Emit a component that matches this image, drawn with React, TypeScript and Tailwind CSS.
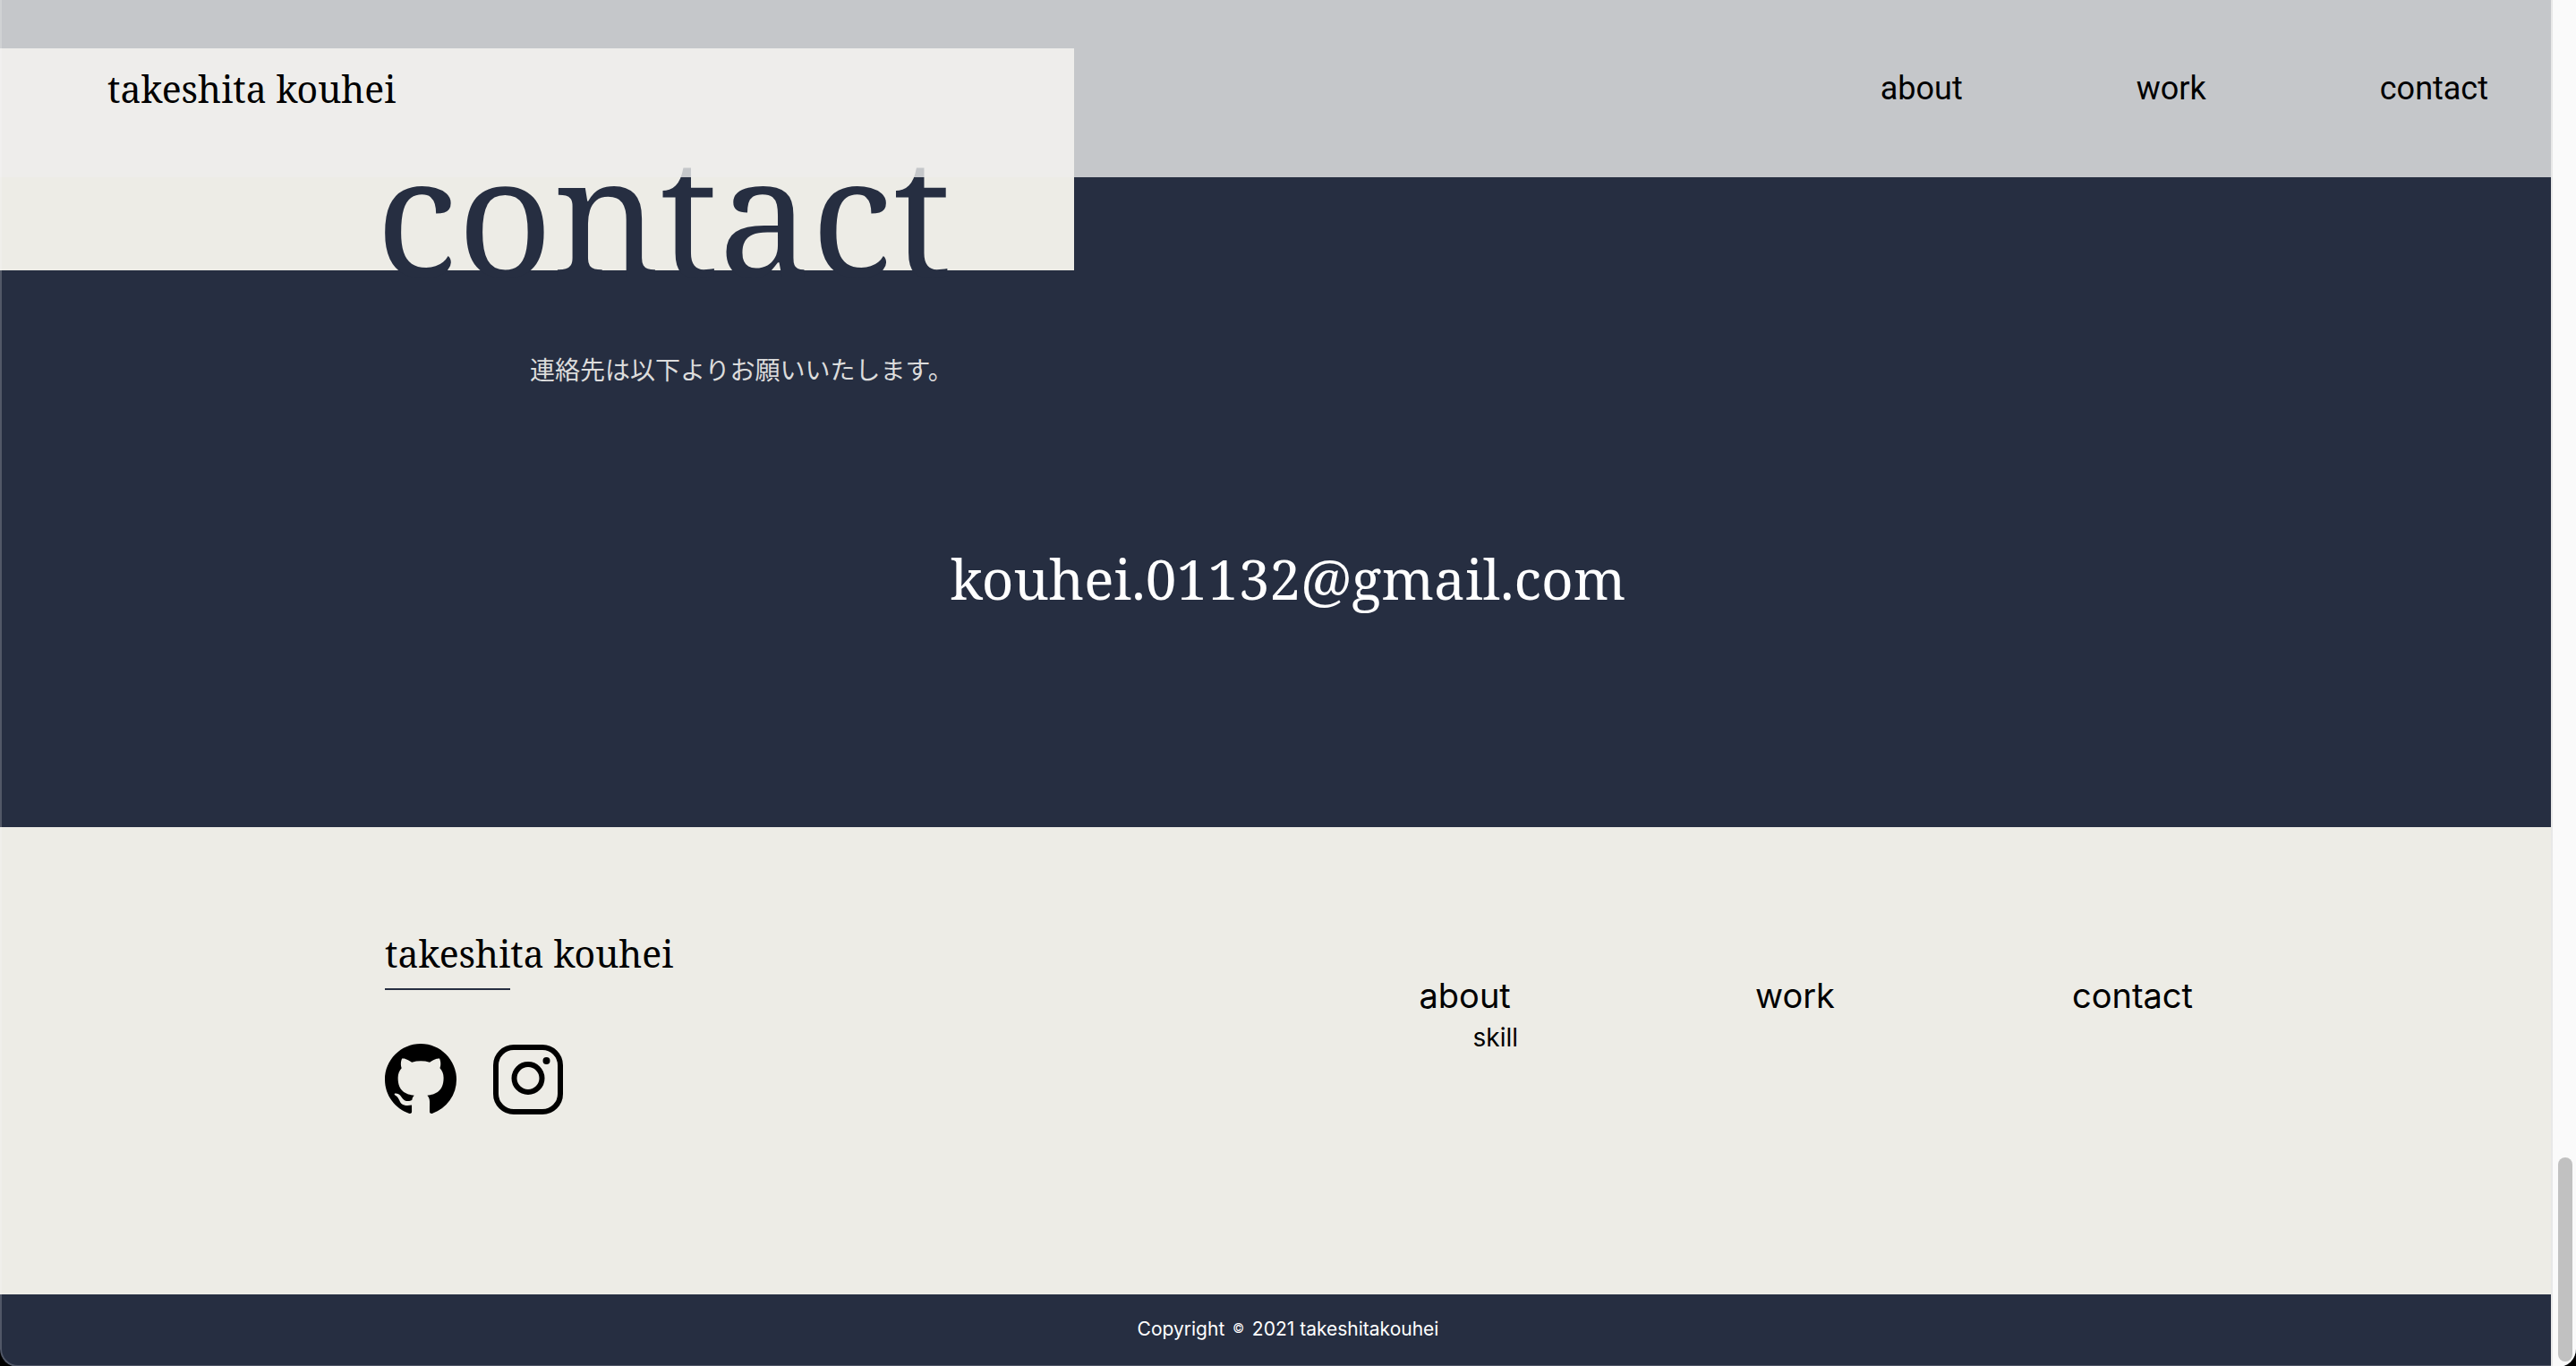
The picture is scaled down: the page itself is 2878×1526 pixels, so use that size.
const serif = "font-['Noto_Serif','DejaVu_Serif_Condensed',serif]";

function InstagramIcon() {
  return (
    <svg viewBox="0 0 78 78" className="h-[78px] w-[78px]" fill="none" stroke="currentColor" aria-hidden="true">
      <rect x="3" y="3" width="72" height="72" rx="20" strokeWidth="6" />
      <circle cx="39" cy="37.5" r="15.5" strokeWidth="6" />
      <circle cx="59.5" cy="18" r="4" fill="currentColor" stroke="none" />
    </svg>
  );
}

function GithubIcon() {
  return (
    <svg viewBox="0 0 16 16" className="h-20 w-20" fill="currentColor" aria-hidden="true">
      <path d="M8 0C3.58 0 0 3.58 0 8c0 3.54 2.29 6.53 5.47 7.59.4.07.55-.17.55-.38 0-.19-.01-.82-.01-1.49-2.01.37-2.53-.49-2.69-.94-.09-.23-.48-.94-.82-1.13-.28-.15-.68-.52-.01-.53.63-.01 1.08.58 1.23.82.72 1.21 1.87.87 2.33.66.07-.52.28-.87.51-1.07-1.78-.2-3.64-.89-3.64-3.95 0-.87.31-1.59.82-2.15-.08-.2-.36-1.02.08-2.12 0 0 .67-.21 2.2.82.64-.18 1.32-.27 2-.27s1.36.09 2 .27c1.53-1.04 2.2-.82 2.2-.82.44 1.1.16 1.92.08 2.12.51.56.82 1.27.82 2.15 0 3.07-1.87 3.75-3.65 3.95.29.25.54.73.54 1.48 0 1.07-.01 1.93-.01 2.2 0 .21.15.46.55.38A8.01 8.01 0 0 0 16 8c0-4.42-3.58-8-8-8Z" />
    </svg>
  );
}

function Header() {
  return (
    <header className="absolute inset-x-0 top-0 flex h-[198px] items-start justify-between bg-[#eeeeec]/80 pl-[120px] pr-[98px] pt-[71px] text-black">
      <a href="#top" className={`text-[41px] leading-[56px] ${serif}`}>
        takeshita kouhei
      </a>
      <nav aria-label="Main" className="flex gap-[194px] font-['Roboto',sans-serif] text-[36px] leading-[56px]">
        <a href="#about">about</a>
        <a href="#work">work</a>
        <a href="#contact">contact</a>
      </nav>
    </header>
  );
}

function Contact() {
  return (
    <section id="contact" className="bg-[#262e41] pb-[228px] pt-[54px]">
      <div className="h-[248px] w-[1200px] bg-[#edece6] pl-[420px] pt-[91px]">
        <h2 className={`text-[185px] leading-none text-[#262e41] ${serif}`}>contact</h2>
      </div>
      <p className="mt-[89px] pl-[592px] font-['Noto_Sans_CJK_JP',sans-serif] text-[28px] leading-[42px] text-[#dcdcdc]">
        連絡先は以下よりお願いいたします。
      </p>
      <p className={`mt-[163px] text-center text-[62px] leading-[100px] text-white ${serif}`}>
        <a href="mailto:kouhei.01132@gmail.com">kouhei.01132@gmail.com</a>
      </p>
    </section>
  );
}

function Footer() {
  return (
    <footer className="font-['Inter',sans-serif]">
      <div className="flex min-h-[522px] items-start justify-between bg-[#edece6] pl-[430px] pr-[428px] pt-[113px] text-black">
        <div>
          <a href="#top" className={`block text-[41px] leading-[56px] ${serif}`}>
            takeshita kouhei
          </a>
          <div className="mt-[11px] h-[2px] w-[140px] bg-[#262e41]" />
          <div className="mt-[60px] flex items-center gap-[41px]">
            <a href="#github" aria-label="GitHub">
              <GithubIcon />
            </a>
            <a href="#instagram" aria-label="Instagram">
              <InstagramIcon />
            </a>
          </div>
        </div>
        <nav aria-label="Footer" className="mt-[50px] flex items-start gap-[265px] text-[38px] leading-[50px]">
          <div>
            <a href="#about" className="block">
              about
            </a>
            <a href="#skill" className="block pl-[60px] text-[28px] leading-[44px]">
              skill
            </a>
          </div>
          <a href="#work">work</a>
          <a href="#contact">contact</a>
        </nav>
      </div>
      <p className="bg-[#262e41] pb-[22px] pt-[18px] text-center text-[21px] leading-10 text-white">
        <small className="text-[21px]">
          Copyright <span className="px-[3px] align-[3px] text-[14px]">©</span> 2021 takeshitakouhei
        </small>
      </p>
    </footer>
  );
}

function ScrollTrack() {
  return (
    <div className="absolute inset-y-0 right-0 flex w-7 flex-col justify-end border-l-2 border-[#e8e8e8] bg-[#fafafa] pb-[6px] pl-[6px]">
      <div className="h-[228px] w-4 rounded-full bg-[#c1c1c1]" />
    </div>
  );
}

export default function App() {
  return (
    <div className="bg-black">
      <div id="top" className="relative overflow-hidden rounded-b-[20px]">
        <Contact />
        <Footer />
        <Header />
        <div className="pointer-events-none absolute inset-0 rounded-b-[20px] border-b-2 border-l-2 border-white/20" />
        <ScrollTrack />
      </div>
    </div>
  );
}
